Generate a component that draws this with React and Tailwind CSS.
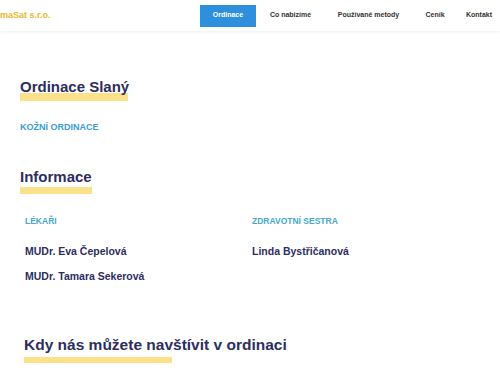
const navItems = [
  { label: "Ordinace", w: "w-[56px]", active: true },
  { label: "Co nabízíme", w: "w-[69px]" },
  { label: "Používané metody", w: "w-[87px]" },
  { label: "Ceník", w: "w-[46px]" },
  { label: "Kontakt", w: "w-[42px]" },
];

const App = () => {
  return (
    <div className="min-h-[375px] w-[500px] overflow-hidden bg-white font-['Liberation_Sans',Arial,sans-serif]">
      {/* header */}
      <header className="flex h-[31px] items-center bg-white shadow-[0_1px_3px_rgba(0,0,0,0.07)]">
        <span className="text-[9px] font-bold text-[#e6b82a]">maSat s.r.o.</span>
        <nav className="ml-auto flex h-full items-center">
          {navItems.map((item) => (
            <a
              key={item.label}
              className={
                item.active
                  ? `${item.w} flex h-[22px] items-center justify-center bg-[#2e8fdc] text-[7px] font-bold text-white`
                  : `${item.w} flex h-[22px] items-center justify-center text-[7px] font-bold text-[#333]`
              }
            >
              {item.label}
            </a>
          ))}
        </nav>
      </header>

      <main className="pl-[20px] text-[#2c2e5f]">
        <h2 className="relative z-10 mt-[47px] text-[15px] leading-[18px] font-bold">Ordinace Slaný</h2>
        <div className="-mt-[3px] h-[8px] w-[108px] bg-[#fbe28a]" />

        <p className="mt-[20px] text-[9px] leading-[12px] font-bold text-[#3a9bd5]">KOŽNÍ ORDINACE</p>

        <h2 className="relative z-10 mt-[35px] text-[15px] leading-[18px] font-bold">Informace</h2>
        <div className="mt-[1px] h-[7px] w-[72px] bg-[#fbe28a]" />

        <div className="mt-[22px] grid grid-cols-[227px_1fr] pl-[5px]">
          <div>
            <p className="text-[8.5px] leading-[10px] font-bold text-[#45a8cc]">LÉKAŘI</p>
            <p className="mt-[19px] text-[10.5px] leading-[13px] font-bold">MUDr. Eva Čepelová</p>
            <p className="mt-[12px] text-[10.5px] leading-[13px] font-bold">MUDr. Tamara Sekerová</p>
          </div>
          <div>
            <p className="text-[8.5px] leading-[10px] font-bold text-[#45a8cc]">ZDRAVOTNÍ SESTRA</p>
            <p className="mt-[19px] text-[10.5px] leading-[13px] font-bold">Linda Bystřičanová</p>
          </div>
        </div>

        <div className="pl-[4px]">
          <h2 className="relative z-10 mt-[53px] text-[15.5px] leading-[18px] font-bold">
            Kdy nás můžete navštívit v ordinaci
          </h2>
          <div className="mt-[3px] h-[6px] w-[148px] bg-[#fbe28a]" />
        </div>
      </main>
    </div>
  );
};

export default App;
